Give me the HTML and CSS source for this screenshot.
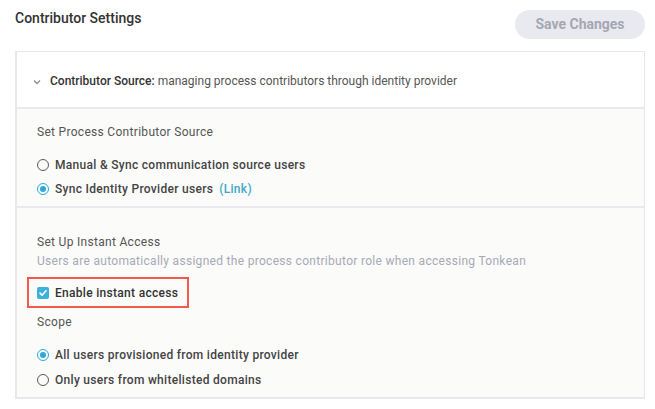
FILE: index.html
```html
<!DOCTYPE html>
<html>
<head>
<meta charset="utf-8">
<link rel="stylesheet" href="styles.css">
</head>
<body>
<div class="page">
  <div class="topbar">
    <div class="title">Contributor Settings</div>
    <button class="save">Save Changes</button>
  </div>
  <div class="panel">
    <div class="panel-head">
      <svg class="chev" width="8" height="6" viewBox="0 0 8 6"><path d="M1 1.5 L4 4.5 L7 1.5" fill="none" stroke="#8a8d96" stroke-width="1.3"/></svg>
      <span class="head-text"><b>Contributor Source:</b> managing process contributors through identity provider</span>
    </div>
    <div class="section s1">
      <div class="sec-title">Set Process Contributor Source</div>
      <div class="options">
        <label class="opt"><span class="radio"></span>Manual &amp; Sync communication source users</label>
        <label class="opt"><span class="radio on"></span>Sync Identity Provider users <span class="link">(Link)</span></label>
      </div>
    </div>
    <div class="section s2">
      <div class="sec-title">Set Up Instant Access</div>
      <div class="desc">Users are automatically assigned the process contributor role when accessing Tonkean</div>
      <div class="highlight">
        <span class="check"><svg width="12" height="12" viewBox="0 0 12 12"><path d="M3 6.2 L5.1 8.2 L9 3.8" fill="none" stroke="#fff" stroke-width="1.6" stroke-linecap="round" stroke-linejoin="round"/></svg></span>
        <span class="check-label">Enable instant access</span>
      </div>
      <div class="sec-title scope">Scope</div>
      <div class="options o2">
        <label class="opt"><span class="radio on"></span>All users provisioned from identity provider</label>
        <label class="opt"><span class="radio"></span>Only users from whitelisted domains</label>
      </div>
    </div>
  </div>
</div>
</body>
</html>
```

FILE: styles.css
```css
* { box-sizing: border-box; }
html, body { margin: 0; padding: 0; background: #fff; }
body { font-family: Roboto, "Liberation Sans", sans-serif; color: #333; }
.page { padding: 0 10px 0 15px; width: 655px; }
.topbar { display: flex; align-items: center; justify-content: space-between; height: 51px; padding-bottom: 5px; }
.title { font-size: 14px; font-weight: 500; color: #333; margin-top: -11px; }
.save { width: 130px; height: 29px; border: none; border-radius: 15px; background: #e9eaef; color: #a4a7b2; font-family: Roboto, "Liberation Sans", sans-serif; font-size: 14px; font-weight: 700; margin-top: 2px; padding: 0; }
.panel { border: 1px solid #e7e7ec; border-left-width: 2px; border-bottom-width: 2px; }
.panel-head { height: 57px; display: flex; align-items: center; padding-left: 16px; padding-top: 3px; background: #fff; font-size: 12px; color: #555; border-bottom: 2px solid #e9e9ee; }
.chev { margin-right: 9px; margin-top: 1px; }
.head-text b { font-weight: 500; color: #333; }
.section { background: #fbfbfa; padding-left: 20px; font-size: 12px; letter-spacing: 0.3px; }
.s1 { padding-top: 15px; padding-bottom: 5px; border-bottom: 2px solid #e9e9ee; }
.s2 { padding-top: 26px; padding-bottom: 5px; }
.sec-title { line-height: 16px; color: #555; }
.options { margin-top: 13px; display: flex; flex-direction: column; }
.opt { height: 24px; display: flex; align-items: center; font-weight: 500; color: #444; }
.radio { width: 12px; height: 12px; border: 1px solid #5a5a5a; border-radius: 50%; margin-right: 6px; display: inline-flex; align-items: center; justify-content: center; }
.radio.on { border-color: #2aa9df; }
.radio.on::after { content: ""; width: 6px; height: 6px; border-radius: 50%; background: #2aa9df; }
.link { color: #39a8c9; margin-left: 6px; }
.desc { margin-top: 3px; line-height: 16px; color: #a7aab5; }
.highlight { margin-top: 8px; margin-left: -10px; width: 162px; height: 31px; border: 2px solid #f25a4c; display: flex; align-items: center; padding-left: 8px; }
.check { width: 12px; height: 12px; border-radius: 2px; background: #3db0dc; display: inline-flex; margin-right: 6px; }
.check-label { font-weight: 500; color: #333; }
.scope { margin-top: 6px; }
.o2 { margin-top: 12px; }
.o2 .opt { height: 25px; }
```
